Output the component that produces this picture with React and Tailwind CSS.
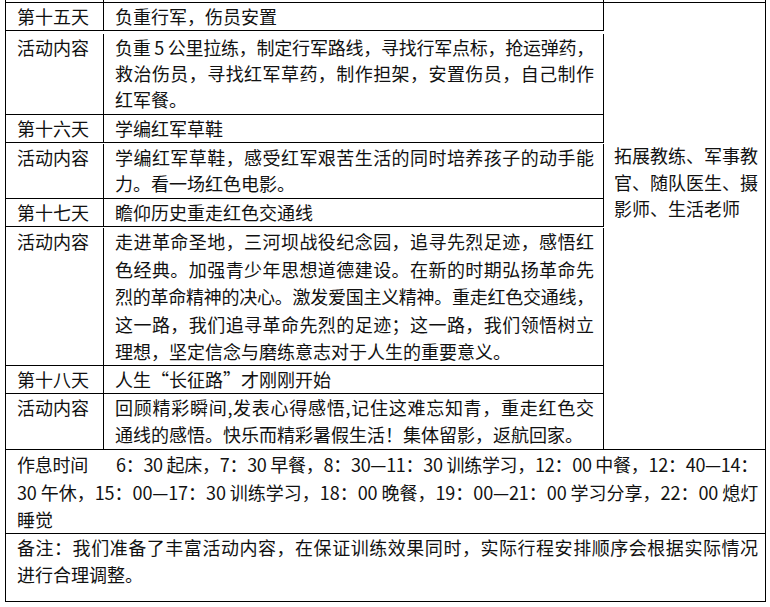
import clsx from "clsx";

const days = [
  {
    title: "第十五天",
    name: "负重行军，伤员安置",
    box: "h-[84px] pt-[3px] leading-[26px]",
    lines: [
      { t: "负重 5 公里拉练，制定行军路线，寻找行军点标，抢运弹药，", cls: "tracking-[-0.3px]" },
      { t: "救治伤员，寻找红军草药，制作担架，安置伤员，自己制作" },
      { t: "红军餐。" },
    ],
  },
  {
    title: "第十六天",
    name: "学编红军草鞋",
    box: "h-[56px] pt-px leading-[26px]",
    lines: [
      { t: "学编红军草鞋，感受红军艰苦生活的同时培养孩子的动手能" },
      { t: "力。看一场红色电影。" },
    ],
  },
  {
    title: "第十七天",
    name: "瞻仰历史重走红色交通线",
    box: "h-[139px] pt-px leading-[27.5px]",
    lines: [
      { t: "走进革命圣地，三河坝战役纪念园，追寻先烈足迹，感悟红" },
      { t: "色经典。加强青少年思想道德建设。在新的时期弘扬革命先" },
      { t: "烈的革命精神的决心。激发爱国主义精神。重走红色交通线，", cls: "tracking-[-0.3px]" },
      { t: "这一路，我们追寻革命先烈的足迹；这一路，我们领悟树立" },
      { t: "理想，坚定信念与磨练意志对于人生的重要意义。" },
    ],
  },
  {
    title: "第十八天",
    name: "人生“长征路”才刚刚开始",
    box: "h-[56px] pt-0 leading-[27px]",
    lines: [
      { t: "回顾精彩瞬间,发表心得感悟,记住这难忘知青，重走红色交" },
      { t: "通线的感悟。快乐而精彩暑假生活！集体留影，返航回家。" },
    ],
  },
];

function Line({ children, last, className }) {
  return (
    <span
      className={clsx(
        "block whitespace-nowrap",
        last ? "text-left" : "text-justify [text-align-last:justify]",
        className
      )}
    >
      {children}
    </span>
  );
}

function Row({ label, box, children }) {
  return (
    <div className={clsx("flex border-b border-black", box)}>
      <div className="w-[98px] shrink-0 border-r border-black pl-[11px]">{label}</div>
      <div className="w-[500px] shrink-0 border-r border-black pl-[11px] pr-[9px]">{children}</div>
    </div>
  );
}

export default function App() {
  return (
    <div className="w-[770px] h-[607px] overflow-hidden bg-white text-[18px] text-[#111] font-['Noto_Sans_CJK_SC',sans-serif]">
      <div className="ml-[5px] w-[761px]">
        {/* tail of the table above */}
        <div className="flex h-[2px]">
          <div className="w-[99px] border-x border-black" />
          <div className="w-[500px] border-r border-black" />
          <div className="w-[162px] border-r border-black" />
        </div>

        <div className="flex border-l border-t border-black">
          <div className="w-[598px] shrink-0">
            {days.map((d) => (
              <div key={d.title}>
                <Row label={d.title} box="h-[28px] leading-[27px]">
                  {d.name}
                </Row>
                <Row label="活动内容" box={d.box}>
                  {d.lines.map((l, i) => (
                    <Line key={i} last={i === d.lines.length - 1} className={l.cls}>
                      {l.t}
                    </Line>
                  ))}
                </Row>
              </div>
            ))}
          </div>
          <div className="w-[162px] shrink-0 border-r border-b border-black pl-[10px] pt-[139px] leading-[26.5px]">
            拓展教练、军事教官、随队医生、摄影师、生活老师
          </div>
        </div>

        <div className="border-x border-b border-black h-[84px] pl-[11px] pr-[7px] pt-px leading-[27.5px]">
          <Line className="tracking-[-0.3px]">
            作息时间<span className="inline-block w-[28px]" />6：30 起床，7：30 早餐，8：30—11：30 训练学习，12：00 中餐，12：40—14：
          </Line>
          <Line className="tracking-[-0.15px]">
            30 午休，15：00—17：30 训练学习，18：00 晚餐，19：00—21：00 学习分享，22：00 熄灯
          </Line>
          <Line last>睡觉</Line>
        </div>

        <div className="border-x border-b border-black h-[68px] pl-[11px] pr-[7px] leading-[27px]">
          <Line>备注：我们准备了丰富活动内容，在保证训练效果同时，实际行程安排顺序会根据实际情况</Line>
          <Line last>进行合理调整。</Line>
        </div>
      </div>
    </div>
  );
}
